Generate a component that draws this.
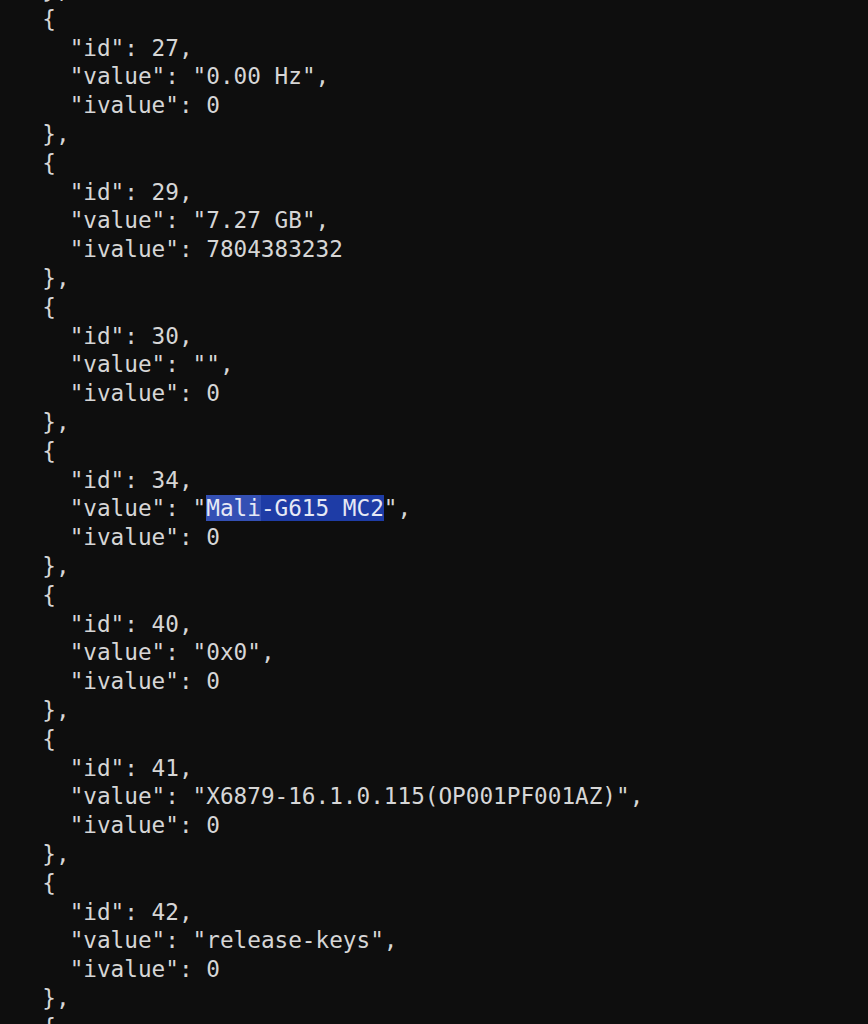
import React from 'react';

type Entry = { id: number; value: string; ivalue: number; selected?: boolean };

const entries: Entry[] = [
  { id: 27, value: '0.00 Hz', ivalue: 0 },
  { id: 29, value: '7.27 GB', ivalue: 7804383232 },
  { id: 30, value: '', ivalue: 0 },
  { id: 34, value: 'Mali-G615 MC2', ivalue: 0, selected: true },
  { id: 40, value: '0x0', ivalue: 0 },
  { id: 41, value: 'X6879-16.1.0.115(OP001PF001AZ)', ivalue: 0 },
  { id: 42, value: 'release-keys', ivalue: 0 },
];

function Line({ children }: { children: React.ReactNode }) {
  return <div className="h-[28.8px] leading-[28.8px] whitespace-pre">{children}</div>;
}

function Value({ e }: { e: Entry }) {
  if (!e.selected) return <>"{e.value}"</>;
  // selection spans the string contents, first word slightly lighter
  return (
    <>
      "<span className="bg-[#3450b4] text-[#e6e9f5]">{e.value.slice(0, 4)}</span>
      <span className="bg-[#1e3ca6] text-[#e6e9f5]">{e.value.slice(4)}</span>"
    </>
  );
}

export default function App() {
  return (
    <div className="w-[868px] h-[1024px] overflow-hidden bg-[#0e0e0e] text-[#d6d6d6] font-['DejaVu_Sans_Mono',monospace] text-[22.7px]">
      <div className="pl-[15px] mt-[-24px]">
        <Line>{'  },'}</Line>
        {entries.map((e) => (
          <div key={e.id}>
            <Line>{'  {'}</Line>
            <Line>{`    "id": ${e.id},`}</Line>
            <Line>
              {'    "value": '}
              <Value e={e} />
              {','}
            </Line>
            <Line>{`    "ivalue": ${e.ivalue}`}</Line>
            <Line>{'  },'}</Line>
          </div>
        ))}
        <Line>{'  {'}</Line>
      </div>
    </div>
  );
}
